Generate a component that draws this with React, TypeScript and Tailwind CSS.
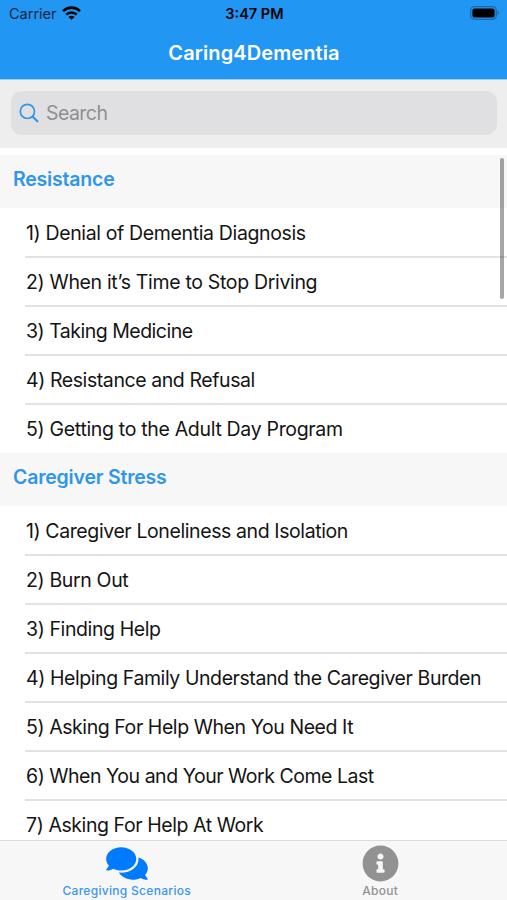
import React from "react";
import { FaComments, FaInfoCircle } from "react-icons/fa";

interface Section {
  title: string;
  items: { label: string; className: string }[];
}

const sections: Section[] = [
  {
    title: "Resistance",
    items: [
      { label: "Denial of Dementia Diagnosis", className: "tracking-[-0.36px]" },
      { label: "When it’s Time to Stop Driving", className: "tracking-[-0.33px]" },
      { label: "Taking Medicine", className: "tracking-[-0.5px]" },
      { label: "Resistance and Refusal", className: "tracking-[-0.42px]" },
      { label: "Getting to the Adult Day Program", className: "tracking-[-0.32px]" },
    ],
  },
  {
    title: "Caregiver Stress",
    items: [
      { label: "Caregiver Loneliness and Isolation", className: "tracking-[-0.4px]" },
      { label: "Burn Out", className: "tracking-[-0.36px]" },
      { label: "Finding Help", className: "tracking-[-0.4px]" },
      { label: "Helping Family Understand the Caregiver Burden", className: "tracking-[-0.42px]" },
      { label: "Asking For Help When You Need It", className: "tracking-[-0.43px]" },
      { label: "When You and Your Work Come Last", className: "tracking-[-0.47px]" },
      { label: "Asking For Help At Work", className: "tracking-[-0.42px]" },
    ],
  },
];

function StatusBar() {
  return (
    <div className="h-[27px] pl-[9px] pr-[7px] grid grid-cols-3 items-center text-black">
      <div className="flex items-center gap-[5px]">
        <span className="pt-px text-[14.5px] leading-none text-[#0b2440]">Carrier</span>
        <svg className="w-[19px] h-[14px] -mt-px" viewBox="0 0 19 14" fill="none" stroke="currentColor" strokeWidth="2.6">
          <path d="M1 5.1a12.2 12.2 0 0 1 17 0" />
          <path d="M4.2 8.6a7.6 7.6 0 0 1 10.6 0" />
          <path d="M9.5 13.8 6.5 10.9a4.2 4.2 0 0 1 6 0z" fill="currentColor" stroke="none" />
        </svg>
      </div>
      <span className="pt-px text-center text-[14.5px] leading-none font-semibold">3:47 PM</span>
      <svg className="w-[30px] h-[14px] -mt-px justify-self-end" viewBox="0 0 30 14">
        <rect x="0.7" y="0.7" width="25.6" height="12.6" rx="3.8" fill="none" stroke="#1769aa" strokeWidth="1.3" />
        <rect x="2.4" y="2.4" width="22.2" height="9.2" rx="2.2" fill="#000" />
        <path d="M27.6 4.8c1.7.5 1.7 3.9 0 4.4z" fill="#1769aa" />
      </svg>
    </div>
  );
}

export default function App() {
  return (
    <div className="w-[507px] h-[900px] flex flex-col overflow-hidden bg-white font-['Inter',sans-serif]">
      <header className="h-[79px] shrink-0 bg-[#2296f3]">
        <StatusBar />
        <h1 className="h-[52px] pl-px text-center text-[20px] leading-[52px] font-semibold tracking-[0.1px] text-white">
          Caring4Dementia
        </h1>
      </header>

      {/* Search */}
      <div className="h-[69px] shrink-0 bg-[#eeeeef] border-t border-[#9fcdf3] pt-[11px] pl-[11px] pr-[10px]">
        <div className="h-[44px] rounded-[11px] bg-[#e0e0e2] flex items-center pl-[8px] gap-[7px]">
          <svg className="w-5 h-5" viewBox="0 0 20 20" fill="none" stroke="#2f96ea" strokeLinecap="round">
            <circle cx="8.4" cy="8.4" r="7.1" strokeWidth="1.7" />
            <path d="m13.7 13.7 4.7 4.6" strokeWidth="2.2" />
          </svg>
          <span className="pt-px text-[19.5px] leading-none tracking-[-0.55px] text-[#8e8e92]">Search</span>
        </div>
      </div>

      {/* Scenario list */}
      <main className="relative flex-1 min-h-0 overflow-hidden pt-[7px]">
        {sections.map((section) => (
          <section key={section.title}>
            <h2 className="h-[53px] pl-[13px] bg-[#f7f7f7] text-[19.5px] leading-[49px] font-semibold tracking-[-0.2px] text-[#2f96ea]">
              {section.title}
            </h2>
            <ul className="pt-px pl-[25px]">
              {section.items.map((item, i) => (
                <li
                  key={item.label}
                  className="h-[49px] last:h-[48px] pl-px border-b-2 border-[#e2e2e3] last:border-b-0 text-[19.5px] leading-[49px] text-[#141414] whitespace-nowrap"
                >
                  <span className={item.className}>{i + 1}) {item.label}</span>
                </li>
              ))}
            </ul>
          </section>
        ))}
        <div className="absolute right-[3px] top-[10px] w-[4px] h-[141px] rounded-full bg-black/35" />
      </main>

      {/* Tab bar */}
      <nav className="h-[60px] shrink-0 grid grid-cols-2 bg-[#f7f7f8] border-t border-[#dcdcdd] font-medium text-[12px] leading-none tracking-[0.3px]">
        <div className="flex flex-col items-center pt-[4px] text-[#007aff]">
          <FaComments className="w-[42px] h-[37px]" />
          <span className="mt-[3px] text-[#3b95f2]">Caregiving Scenarios</span>
        </div>
        <div className="flex flex-col items-center pt-[4px] text-[#929292]">
          <FaInfoCircle className="w-[37px] h-[37px]" />
          <span className="mt-[3px]">About</span>
        </div>
      </nav>
    </div>
  );
}
